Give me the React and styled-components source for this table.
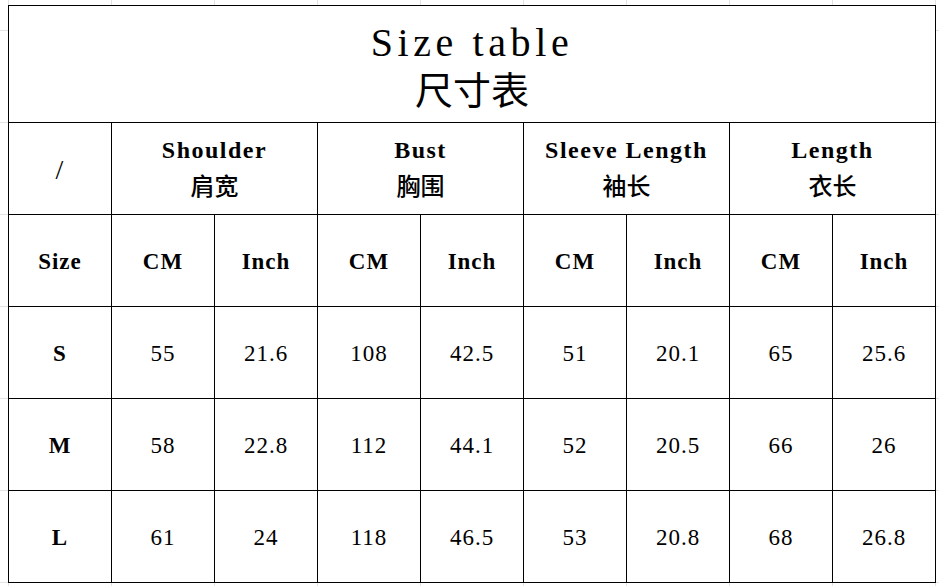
import React from "react";
import styled, { createGlobalStyle } from "styled-components";

const GlobalStyle = createGlobalStyle`
	html,
	body {
		margin: 0;
		padding: 0;
		background: #fff;
	}
	body {
		font-family: "Liberation Serif", "Noto Sans CJK SC", serif;
		color: #000;
	}
`;

// faint spreadsheet grid behind the table
const Sheet = styled.div`
	min-height: 100vh;
	box-sizing: border-box;
	padding: 5px 0 0 8px;
	background-image: linear-gradient(to right, #e2e2e2 1px, transparent 1px),
		linear-gradient(to bottom, #e2e2e2 1px, transparent 1px);
	background-size: 103px 100%, 100% 92px;
	background-position: 8px 0, 0 30px;
`;

const Grid = styled.div`
	display: grid;
	grid-template-columns: repeat(9, 103px);
	grid-template-rows: 117px repeat(5, 92px);
	width: max-content;
	background: #fff;
	border-right: 1px solid #000;
	border-bottom: 1px solid #000;
`;

const Cell = styled.div`
	grid-column: span ${(p) => p.$span || 1};
	border-top: 1px solid #000;
	border-left: 1px solid #000;
	box-sizing: border-box;
	padding-top: ${(p) => p.$pad || "3px"};
	display: flex;
	flex-direction: column;
	align-items: center;
	justify-content: center;
	text-align: center;
	font-size: ${(p) => p.$size || "23px"};
	letter-spacing: 1px;
	font-weight: ${(p) => (p.$bold ? 700 : 400)};
	white-space: nowrap;
`;

const TitleLine = styled.div`
	font-size: ${(p) => (p.$zh ? "38px" : "40px")};
	line-height: 48px;
	letter-spacing: ${(p) => (p.$zh ? "0" : "4.6px")};
`;

const HeadLine = styled.div`
	font-size: 24px;
	line-height: 37px;
	font-weight: ${(p) => (p.$zh ? 500 : 700)};
	letter-spacing: ${(p) => (p.$zh ? "0" : "1.5px")};
`;

const groups = [
	{ en: "Shoulder", zh: "肩宽" },
	{ en: "Bust", zh: "胸围" },
	{ en: "Sleeve Length", zh: "袖长" },
	{ en: "Length", zh: "衣长" },
];

const rows = [
	{ size: "S", values: ["55", "21.6", "108", "42.5", "51", "20.1", "65", "25.6"] },
	{ size: "M", values: ["58", "22.8", "112", "44.1", "52", "20.5", "66", "26"] },
	{ size: "L", values: ["61", "24", "118", "46.5", "53", "20.8", "68", "26.8"] },
];

const App = () => {
	return (
		<>
			<GlobalStyle />
			<Sheet>
				<Grid>
					<Cell $span={9} $pad="5px">
						<TitleLine>Size table</TitleLine>
						<TitleLine $zh>尺寸表</TitleLine>
					</Cell>

					<Cell $size="28px" $pad="2px">/</Cell>
					{groups.map((g) => (
						<Cell key={g.en} $span={2} $pad="0">
							<HeadLine>{g.en}</HeadLine>
							<HeadLine $zh>{g.zh}</HeadLine>
						</Cell>
					))}

					<Cell $bold>Size</Cell>
					{groups.map((g) => (
						<React.Fragment key={g.en}>
							<Cell $bold>CM</Cell>
							<Cell $bold>Inch</Cell>
						</React.Fragment>
					))}

					{rows.map((r) => (
						<React.Fragment key={r.size}>
							<Cell $bold>{r.size}</Cell>
							{r.values.map((v, i) => (
								<Cell key={i}>{v}</Cell>
							))}
						</React.Fragment>
					))}
				</Grid>
			</Sheet>
		</>
	);
};

export default App;
